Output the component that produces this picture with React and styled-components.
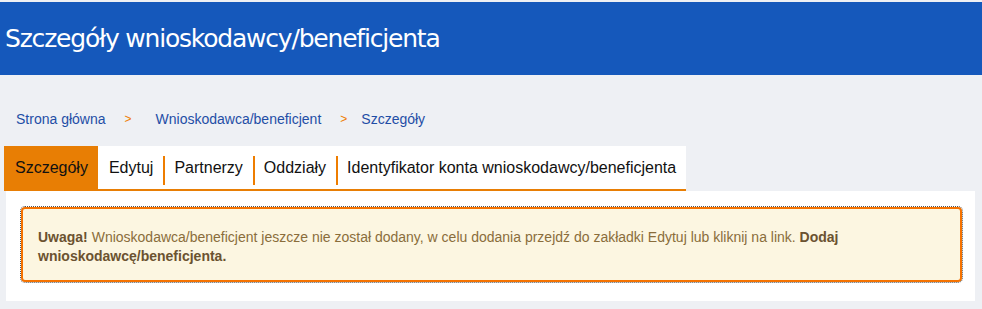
import React from "react";
import styled, { createGlobalStyle } from "styled-components";

const GlobalStyle = createGlobalStyle`
  body {
    margin: 0;
    background-color: #eef0f4;
    font-family: "Liberation Sans", Arial, sans-serif;
  }
`;

const Header = styled.header`
  margin-top: 2px;
  height: 73px;
  background-color: #1558bb;
  display: flex;
  align-items: center;
  padding-left: 5px;
  h1 {
    margin: 0;
    font-family: "DejaVu Sans", Verdana, sans-serif;
    font-weight: normal;
    font-size: 25px;
    letter-spacing: -1.2px;
    color: #ffffff;
  }
`;

const Breadcrumb = styled.nav`
  display: flex;
  align-items: center;
  padding: 34px 0 0 16px;
  height: 20px;
  font-size: 14px;
  a {
    color: #1f4ea6;
    text-decoration: none;
  }
`;

const Arrow = styled.span`
  color: #ee7d00;
  font-size: 12px;
  margin: 0 ${(props) => props.right}px 0 ${(props) => props.left}px;
`;

const TabsRow = styled.div`
  display: flex;
  width: fit-content;
  margin: 17px 0 0 4px;
  background-color: #ffffff;
  border-bottom: 2px solid #e87e04;
`;

const Tab = styled.div`
  position: relative;
  flex-shrink: 0;
  white-space: nowrap;
  display: flex;
  align-items: center;
  height: 43px;
  padding: 0 10px 0 11px;
  font-size: 16px;
  color: #111111;
  background-color: ${(props) => (props.active ? "#e87e04" : "transparent")};
  &::before {
    content: "";
    display: ${(props) => (props.separator ? "block" : "none")};
    position: absolute;
    left: 0;
    top: 10px;
    bottom: 4px;
    width: 2px;
    background-color: #ee7d00;
  }
`;

const Panel = styled.section`
  margin: 0 7px 0 6px;
  background-color: #ffffff;
  padding: 16px 13px 19px 15px;
`;

const Alert = styled.div`
  border: 2px solid #f57200;
  border-radius: 4px;
  outline: 1px dotted #555555;
  background-color: #fcf6e1;
  color: #8a6d3b;
  font-size: 14px;
  line-height: 19px;
  padding: 19px 15px 14px 15px;
  b {
    color: #6b5230;
  }
`;

const tabs = [
  { label: "Szczegóły", active: true },
  { label: "Edytuj" },
  { label: "Partnerzy", separator: true },
  { label: "Oddziały", separator: true },
  { label: "Identyfikator konta wnioskodawcy/beneficjenta", separator: true },
];

const App = () => {
  return (
    <>
      <GlobalStyle />
      <Header>
        <h1>Szczegóły wnioskodawcy/beneficjenta</h1>
      </Header>
      <Breadcrumb>
        <a href="#">Strona główna</a>
        <Arrow left={19} right={24}>&gt;</Arrow>
        <a href="#">Wnioskodawca/beneficjent</a>
        <Arrow left={19} right={14}>&gt;</Arrow>
        <a href="#">Szczegóły</a>
      </Breadcrumb>
      <TabsRow>
        {tabs.map((t) => (
          <Tab key={t.label} active={t.active} separator={t.separator}>
            {t.label}
          </Tab>
        ))}
      </TabsRow>
      <Panel>
        <Alert>
          <b>Uwaga!</b> Wnioskodawca/beneficjent jeszcze nie został dodany, w
          celu dodania przejdź do zakładki Edytuj lub kliknij na link.{" "}
          <b>Dodaj wnioskodawcę/beneficjenta.</b>
        </Alert>
      </Panel>
    </>
  );
};

export default App;
